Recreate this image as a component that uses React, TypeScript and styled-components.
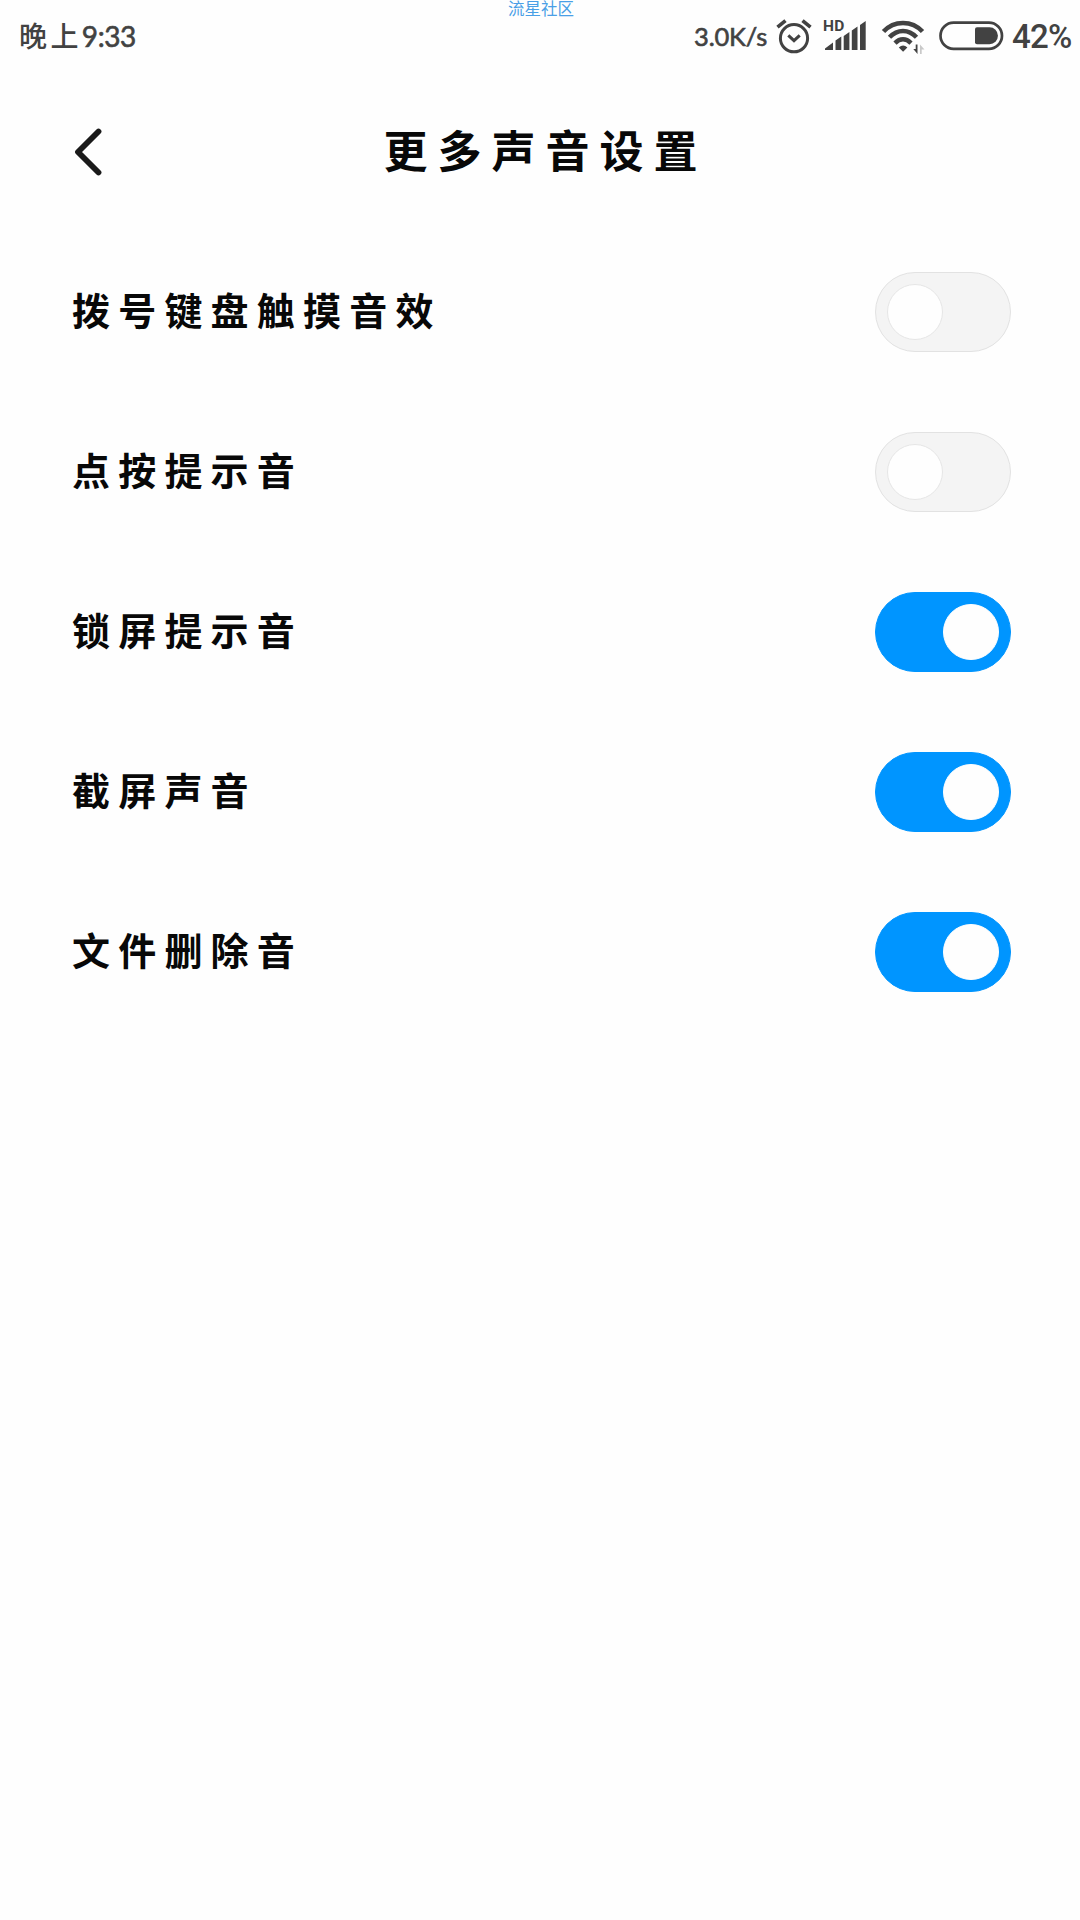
import React, { useState } from "react";
import styled, { createGlobalStyle } from "styled-components";

const INK = "#424242";

const GlobalStyle = createGlobalStyle`
  * { box-sizing: border-box; }
  body { margin: 0; background: #fefefe; }
`;

const Screen = styled.div`
  width: 1080px;
  height: 1920px;
  overflow: hidden;
  background: #fefefe;
  color: #080808;
  font-family: "Noto Sans CJK SC", sans-serif;
`;

const StatusBar = styled.header`
  position: relative;
  display: flex;
  align-items: center;
  height: 72px;
  padding: 0 8px 0 19px;
  color: ${INK};
`;

const Clock = styled.div`
  display: flex;
  align-items: center;
  margin-right: auto;
  white-space: nowrap;
`;

const Period = styled.span`
  padding-bottom: 2px;
  font-size: 28px;
  line-height: 40px;
  font-weight: 500;
  letter-spacing: 3.4px;
`;

const Latin = styled.span<{ $size: number; $spacing?: number }>`
  font-family: Lato, sans-serif;
  font-size: ${(p) => p.$size}px;
  line-height: 40px;
  font-weight: 400;
  letter-spacing: ${(p) => p.$spacing ?? 0}px;
  -webkit-text-stroke: 0.6px ${INK};
`;

const Watermark = styled.div`
  position: absolute;
  top: 0;
  left: 508px;
  font-size: 16.5px;
  line-height: 16px;
  color: #4a9fe6;
  white-space: nowrap;
`;

const Indicators = styled.div`
  display: flex;
  align-items: center;
  height: 72px;
`;

const Glyph = styled.svg<{ $gap: number }>`
  display: block;
  flex: none;
  overflow: visible;
  margin-left: ${(p) => p.$gap}px;
`;

const Percent = styled.span`
  width: 60px;
  margin-left: 8px;
  padding-top: 2px;
  font-family: Roboto, sans-serif;
  font-size: 33px;
  line-height: 40px;
  font-weight: 500;
  letter-spacing: -0.8px;
  white-space: nowrap;
`;

const TitleBar = styled.div`
  display: grid;
  grid-template-columns: 120px 1fr 120px;
  align-items: center;
  height: 160px;
`;

const BackButton = styled.button`
  display: flex;
  justify-content: flex-end;
  width: 104px;
  padding: 0;
  border: 0;
  background: none;
`;

const Title = styled.h1`
  margin: 0;
  padding: 0 0 6px 11px;
  font-size: 44px;
  line-height: 64px;
  font-weight: 700;
  letter-spacing: 10px;
  text-align: center;
`;

const SettingList = styled.main`
  display: flex;
  flex-direction: column;
`;

const SettingRow = styled.label`
  display: flex;
  align-items: center;
  justify-content: space-between;
  height: 160px;
  padding: 0 69px 0 72px;
`;

const SettingName = styled.span`
  padding-bottom: 6px;
  font-size: 38px;
  line-height: 56px;
  font-weight: 700;
  letter-spacing: 8.2px;
`;

const Switch = styled.button<{ $on: boolean }>`
  display: flex;
  align-items: center;
  justify-content: ${(p) => (p.$on ? "flex-end" : "flex-start")};
  width: 136px;
  height: 80px;
  padding: 0 11px;
  border: 1px solid ${(p) => (p.$on ? "#0095ff" : "#e2e2e2")};
  border-radius: 40px;
  background: ${(p) => (p.$on ? "#0095ff" : "#f4f4f4")};
`;

const Knob = styled.span<{ $on: boolean }>`
  width: 56px;
  height: 56px;
  border: 1px solid ${(p) => (p.$on ? "#fefefe" : "#e6e6e6")};
  border-radius: 50%;
  background: #fefefe;
`;

const AlarmIcon = () => (
  <Glyph $gap={9} width="36" height="36" viewBox="0 0 36 36" fill="none" stroke={INK}>
    <circle cx="18" cy="20.2" r="13.6" strokeWidth="3" />
    <path d="M12.3 17.3l5.7 5.4 5.7-5.4" strokeWidth="3" />
    <path d="M1.500 9.200l8-6.600M34.500 9.200l-8-6.600" strokeWidth="3.6" />
  </Glyph>
);

const SignalIcon = () => (
  <Glyph $gap={12} width="44" height="36" viewBox="0 0 44 36" fill={INK}>
    <text x="-1" y="13" fontFamily="Roboto, sans-serif" fontSize="15.5" fontWeight="700" letterSpacing="0.4">
      HD
    </text>
    <path d="M1 30.5l8-6V32H1zM11.500 22.500l5.800-4V32h-5.800zM19.700 18l5.700-4v18h-5.700zM27.800 12.500l5.700-4V32h-5.700zM36 7l5.700-4v29H36z" />
  </Glyph>
);

const WifiIcon = () => (
  <Glyph $gap={13} width="45" height="36" viewBox="0 0 45 36" fill="none" stroke={INK} strokeWidth="4.5">
    <path d="M2.500 13.500C13 2 31 2 41.500 13.500" />
    <path d="M8.500 19.200c8-8.400 19-8.400 27 0" />
    <path d="M14 25.100c5-5 11-5 16 0" />
    <path d="M17.800 29.500q4.300-4 8.600 0L22.100 33.700z" fill={INK} stroke="none" />
    <path d="M36.500 26.500v9.500L32.300 31h2.400v-4.500z" fill={INK} stroke="none" />
    <path d="M39 26.500v9.500h1.700v-4.500h2.800z" fill="#c9c9c9" stroke="none" />
  </Glyph>
);

const BatteryIcon = () => (
  <Glyph $gap={13} width="65" height="30" viewBox="0 0 65 30" fill="none">
    <rect x="1.500" y="1.700" width="61.500" height="26.200" rx="13.100" stroke={INK} strokeWidth="2.700" />
    <path d="M38 6.300h12.500a8.400 8.400 0 0 1 0 16.900H38a2 2 0 0 1-2-2V8.300a2 2 0 0 1 2-2z" fill={INK} />
  </Glyph>
);

const settings = [
  { name: "拨号键盘触摸音效", on: false },
  { name: "点按提示音", on: false },
  { name: "锁屏提示音", on: true },
  { name: "截屏声音", on: true },
  { name: "文件删除音", on: true },
];

export default function App() {
  const [states, setStates] = useState(settings.map((s) => s.on));
  const toggle = (index: number) =>
    setStates((prev) => prev.map((on, i) => (i === index ? !on : on)));

  return (
    <Screen>
      <GlobalStyle />
      <StatusBar>
        <Clock>
          <Period>晚上</Period>
          <Latin $size={28} $spacing={-0.4}>9:33</Latin>
        </Clock>
        <Watermark>流星社区</Watermark>
        <Indicators>
          <Latin $size={25.5} $spacing={-0.2}>3.0K/s</Latin>
          <AlarmIcon />
          <SignalIcon />
          <WifiIcon />
          <BatteryIcon />
          <Percent>42%</Percent>
        </Indicators>
      </StatusBar>
      <TitleBar>
        <BackButton aria-label="返回">
          <svg width="30" height="50" viewBox="0 0 30 50" fill="none" stroke="#1a1a1a" strokeWidth="5.8" strokeLinecap="round" strokeLinejoin="round">
            <path d="M24.500 4.500L4 25L24.500 45.500" />
          </svg>
        </BackButton>
        <Title>更多声音设置</Title>
      </TitleBar>
      <SettingList>
        {settings.map((setting, i) => (
          <SettingRow key={setting.name}>
            <SettingName>{setting.name}</SettingName>
            <Switch $on={states[i]} role="switch" aria-checked={states[i]} onClick={() => toggle(i)}>
              <Knob $on={states[i]} />
            </Switch>
          </SettingRow>
        ))}
      </SettingList>
    </Screen>
  );
}
